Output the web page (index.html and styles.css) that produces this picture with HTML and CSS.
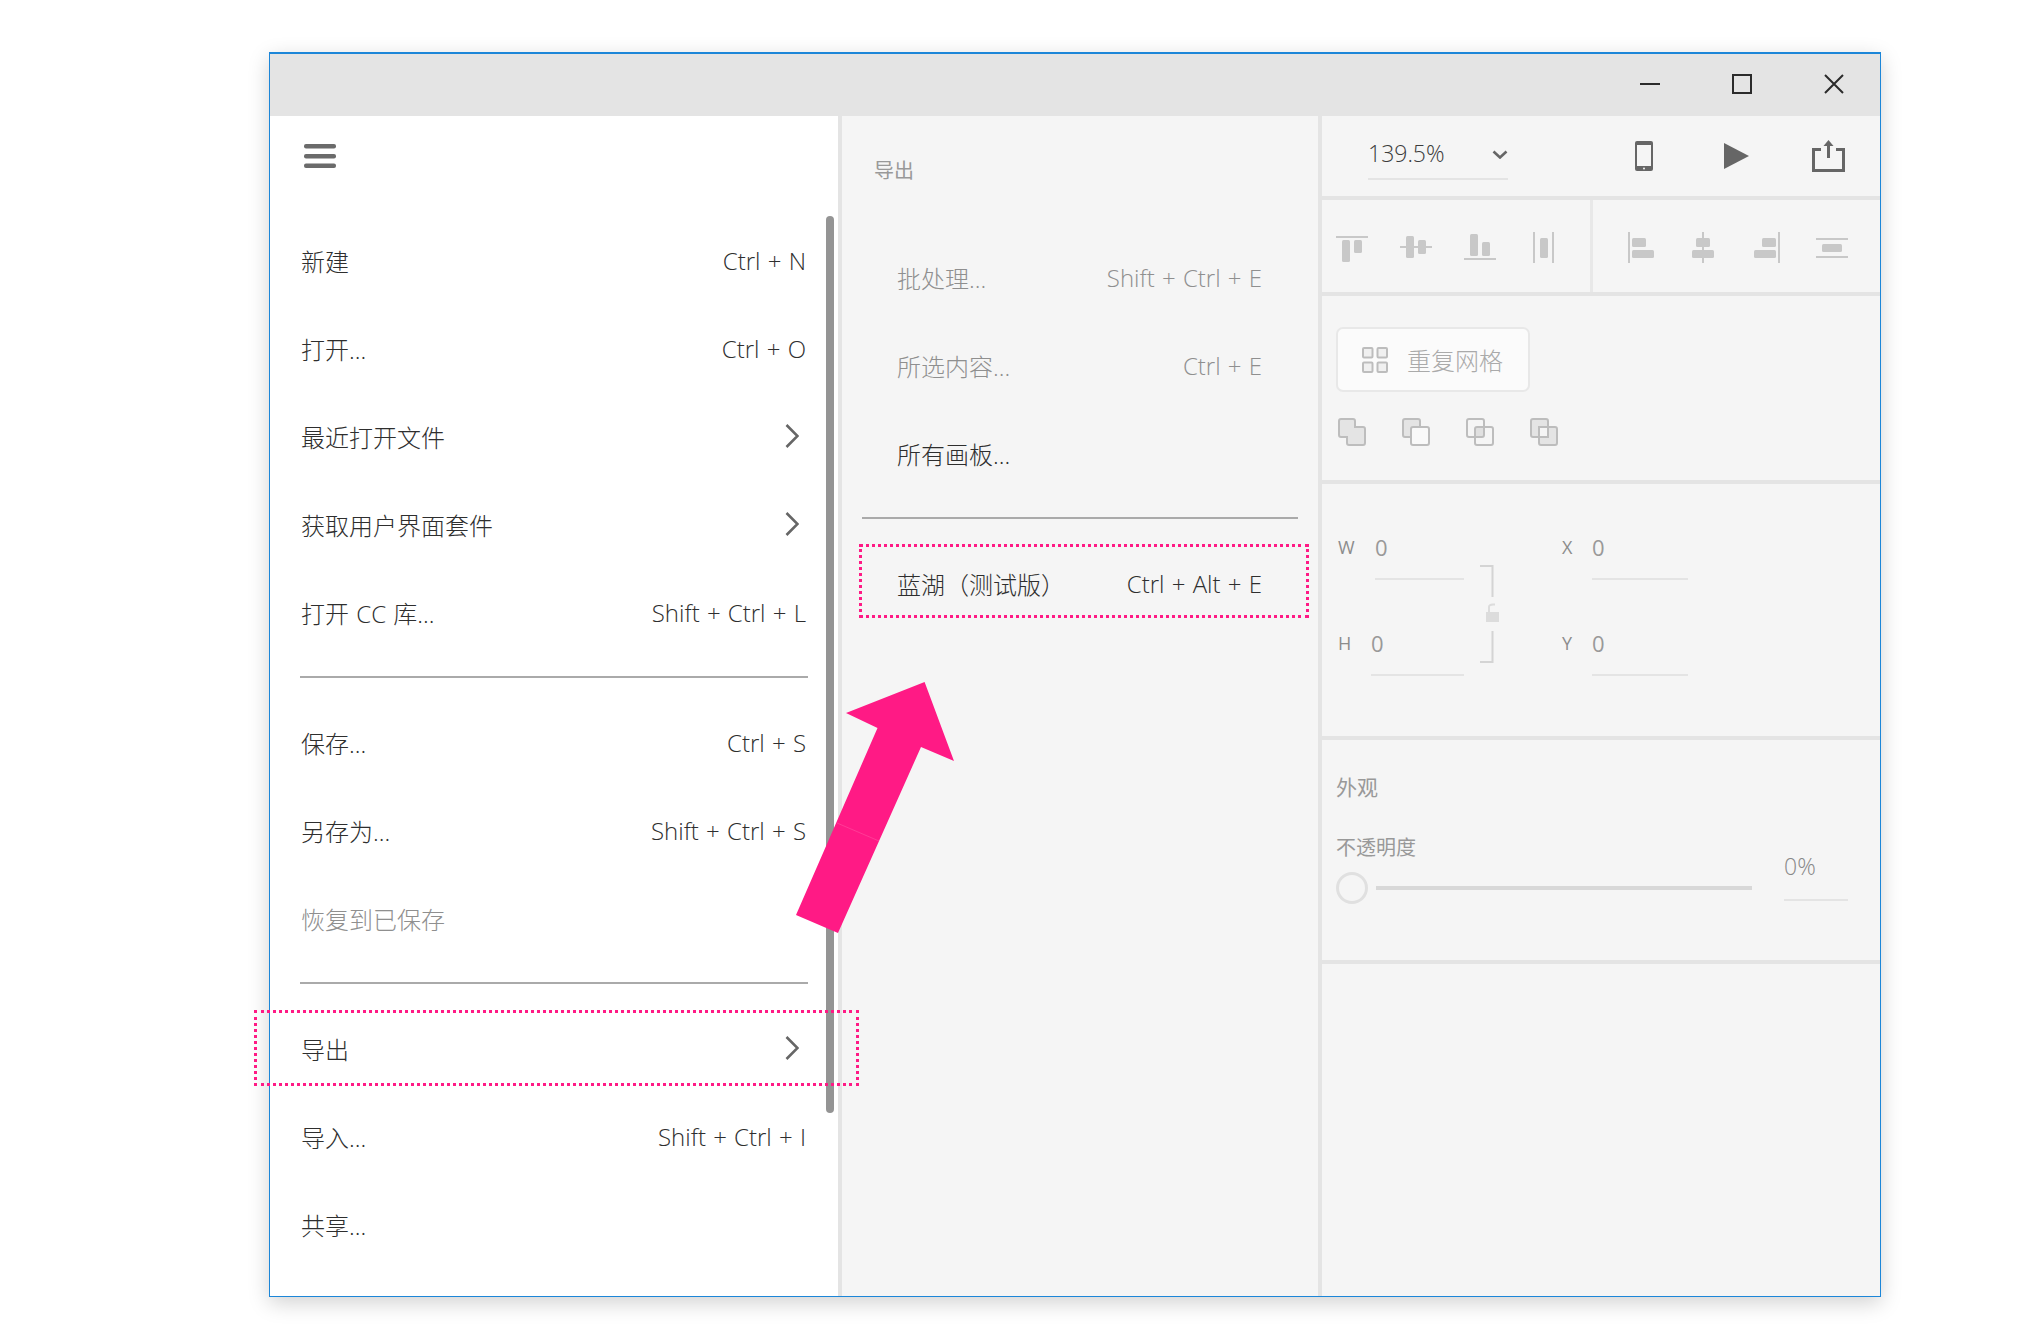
FILE: index.html
```html
<!DOCTYPE html>
<html lang="zh-CN">

<head>
    <meta charset="UTF-8">
    <title>导出</title>
    <link rel="stylesheet" href="styles.css">
</head>

<body>
    <div class="window">
        <header class="titlebar">
            <div class="win-btn">
                <svg width="20" height="20" viewBox="0 0 20 20"><path d="M0 10H20" stroke="#2b2b2b" stroke-width="2" /></svg>
            </div>
            <div class="win-btn">
                <svg width="20" height="20" viewBox="0 0 20 20"><rect x="1" y="1" width="18" height="18" fill="none" stroke="#2b2b2b" stroke-width="2" /></svg>
            </div>
            <div class="win-btn">
                <svg width="20" height="20" viewBox="0 0 20 20"><path d="M1 1L19 19M19 1L1 19" stroke="#2b2b2b" stroke-width="2" /></svg>
            </div>
        </header>

        <main class="panes">
            <section class="pane-menu">
                <div class="menu-top">
                    <svg width="32" height="24" viewBox="0 0 32 24" fill="#6b6b6b">
                        <rect y="0" width="32" height="4.6" rx="2" />
                        <rect y="10" width="32" height="4.6" rx="2" />
                        <rect y="19.6" width="32" height="4.4" rx="2" />
                    </svg>
                </div>
                <div class="menu-row"><span>新建</span><span>Ctrl + N</span></div>
                <div class="menu-row"><span>打开...</span><span>Ctrl + O</span></div>
                <div class="menu-row"><span>最近打开文件</span><svg class="chev" width="14" height="24" viewBox="0 0 14 24"><path d="M1.5 1L12.5 12L1.5 23" /></svg></div>
                <div class="menu-row"><span>获取用户界面套件</span><svg class="chev" width="14" height="24" viewBox="0 0 14 24"><path d="M1.5 1L12.5 12L1.5 23" /></svg></div>
                <div class="menu-row"><span>打开 CC 库...</span><span>Shift + Ctrl + L</span></div>
                <hr class="sep">
                <div class="menu-row"><span>保存...</span><span>Ctrl + S</span></div>
                <div class="menu-row"><span>另存为...</span><span>Shift + Ctrl + S</span></div>
                <div class="menu-row off"><span>恢复到已保存</span></div>
                <hr class="sep">
                <div class="menu-row"><span>导出</span><svg class="chev" width="14" height="24" viewBox="0 0 14 24"><path d="M1.5 1L12.5 12L1.5 23" /></svg></div>
                <div class="menu-row"><span>导入...</span><span>Shift + Ctrl + I</span></div>
                <div class="menu-row"><span>共享...</span></div>
                <div class="scrollbar"></div>
            </section>

            <section class="pane-sub">
                <div class="sub-title">导出</div>
                <div class="menu-row off"><span>批处理...</span><span>Shift + Ctrl + E</span></div>
                <div class="menu-row off"><span>所选内容...</span><span>Ctrl + E</span></div>
                <div class="menu-row"><span>所有画板...</span></div>
                <hr class="sep">
                <div class="menu-row"><span>蓝湖（测试版）</span><span>Ctrl + Alt + E</span></div>
            </section>

            <section class="pane-props">
                <div class="block toolbar">
                    <div class="zoom-select">
                        <span>139.5%</span>
                        <svg width="16" height="9" viewBox="0 0 16 9"><path d="M1.5 1.5L8 7.5L14.5 1.5" fill="none" stroke="#666" stroke-width="2.6" /></svg>
                    </div>
                    <div class="tool-icons">
                        <div class="tool">
                            <svg width="18" height="30" viewBox="0 0 18 30">
                                <rect width="18" height="30" rx="2" fill="#666" />
                                <rect x="2" y="4" width="14" height="21" fill="#f5f5f5" />
                                <circle cx="9" cy="27.5" r="1" fill="#f5f5f5" />
                            </svg>
                        </div>
                        <div class="tool">
                            <svg width="25" height="26" viewBox="0 0 25 26"><path d="M0 0L25 13L0 26Z" fill="#666" /></svg>
                        </div>
                        <div class="tool">
                            <svg width="33" height="32" viewBox="0 0 33 32" fill="none" stroke="#666" stroke-width="3">
                                <path d="M9 9.500H1.500V30.500H31.500V9.500H24" />
                                <path d="M16.500 18V2" />
                                <path d="M16.500 0L21.500 6H11.500Z" fill="#666" stroke="none" />
                            </svg>
                        </div>
                    </div>
                </div>

                <div class="block align-bar">
                    <div class="align-group">
                        <svg class="ai" viewBox="0 0 32 36"><path d="M0 9H32" /><rect x="6" y="12" width="8" height="22" rx="1.500" /><rect x="18" y="12" width="8" height="13" rx="1.500" /></svg>
                        <svg class="ai" viewBox="0 0 32 36"><path d="M0 19H32" /><rect x="6" y="8" width="8" height="22" rx="1.500" /><rect x="18" y="12" width="8" height="14" rx="1.500" /></svg>
                        <svg class="ai" viewBox="0 0 32 36"><path d="M0 31H32" /><rect x="6" y="6" width="8" height="22" rx="1.500" /><rect x="18" y="14" width="8" height="14" rx="1.500" /></svg>
                        <svg class="ai" viewBox="0 0 32 36"><path d="M6 4V35M25 4V35" /><rect x="12" y="10" width="8" height="20" rx="1.500" /></svg>
                    </div>
                    <div class="align-group second">
                        <svg class="ai" viewBox="0 0 32 36"><path d="M5 4V35" /><rect x="8" y="10" width="14" height="9" rx="1.500" /><rect x="8" y="22" width="22" height="8" rx="1.500" /></svg>
                        <svg class="ai" viewBox="0 0 32 36"><path d="M15 4V35" /><rect x="8" y="10" width="14" height="9" rx="1.500" /><rect x="4" y="22" width="22" height="8" rx="1.500" /></svg>
                        <svg class="ai" viewBox="0 0 32 36"><path d="M27 4V35" /><rect x="10" y="10" width="14" height="9" rx="1.500" /><rect x="2" y="22" width="22" height="8" rx="1.500" /></svg>
                        <svg class="ai" viewBox="0 0 32 36"><path d="M0 11H32M0 29H32" /><rect x="6" y="16" width="20" height="8" rx="1.500" /></svg>
                    </div>
                </div>

                <div class="block bool-block">
                    <div class="grid-btn">
                        <svg width="26" height="26" viewBox="0 0 26 26" fill="#f0f0f0" stroke="#bdbdbd" stroke-width="2">
                            <rect x="1" y="1" width="9.500" height="9.500" rx="1" />
                            <rect x="15.500" y="1" width="9.500" height="9.500" rx="1" />
                            <rect x="1" y="15.500" width="9.500" height="9.500" rx="1" />
                            <rect x="15.500" y="15.500" width="9.500" height="9.500" rx="1" />
                        </svg>
                        <span>重复网格</span>
                    </div>
                    <div class="bool-icons">
                        <svg class="bi" viewBox="0 0 28 28"><path d="M3 1H15Q17 1 17 3V9H25Q27 9 27 11V25Q27 27 25 27H11Q9 27 9 25V19H3Q1 19 1 17V3Q1 1 3 1Z" fill="#e4e4e4" /></svg>
                        <svg class="bi" viewBox="0 0 28 28"><rect x="1" y="1" width="17" height="18" rx="2" fill="#e4e4e4" /><rect x="9" y="9" width="18" height="18" rx="2" fill="#f9f9f9" /></svg>
                        <svg class="bi" viewBox="0 0 28 28"><rect x="9" y="9" width="9" height="10" fill="#e0e0e0" stroke="none" /><rect x="1" y="1" width="17" height="18" rx="2" fill="none" /><rect x="9" y="9" width="18" height="18" rx="2" fill="none" /></svg>
                        <svg class="bi" viewBox="0 0 28 28"><rect x="1" y="1" width="17" height="18" rx="2" fill="#e4e4e4" /><rect x="9" y="9" width="18" height="18" rx="2" fill="#e4e4e4" /><rect x="9" y="9" width="9" height="10" fill="#f5f5f5" /></svg>
                    </div>
                </div>

                <div class="block size-block">
                    <div class="size-grid">
                        <div class="field"><span class="field-label w">W</span><span class="field-value">0</span></div>
                        <svg class="link" width="40" height="146" viewBox="0 0 40 146">
                            <path d="M1 35H13.500V66M13.500 100V131H1" fill="none" stroke="#d4d4d4" stroke-width="2" />
                            <rect x="7" y="81" width="13" height="10" fill="#dcdcdc" />
                            <path d="M10 81V76Q10 73.500 14 73.500H16" fill="none" stroke="#dcdcdc" stroke-width="2" />
                        </svg>
                        <div class="field"><span class="field-label">X</span><span class="field-value">0</span></div>
                        <div class="field"><span class="field-label h">H</span><span class="field-value">0</span></div>
                        <div class="field"><span class="field-label">Y</span><span class="field-value">0</span></div>
                    </div>
                </div>

                <div class="block look-block">
                    <div class="look-title">外观</div>
                    <div class="look-row">
                        <div class="look-left">
                            <div class="look-label">不透明度</div>
                            <div class="slider">
                                <div class="knob"></div>
                                <div class="track"></div>
                            </div>
                        </div>
                        <div class="percent">0%</div>
                    </div>
                </div>
            </section>
        </main>

        <!-- 标注层 -->
        <div class="mark mark-export"></div>
        <div class="mark mark-lanhu"></div>
        <svg class="arrow" width="160" height="255" viewBox="0 0 160 255">
            <path d="M128.600 0L50 31L81.500 46L0 233L42 251L125 65L158 79Z" fill="#ff1a85" />
            <path d="M41 141L83 159" stroke="#ff5aa6" stroke-width="0.500" />
        </svg>
    </div>
</body>

</html>
```

FILE: styles.css
```css
html,
body {
    margin: 0;
    height: 100%;
    background: #fff;
}

body {
    padding: 52px 0 0 269px;
    box-sizing: border-box;
    font-family: "Open Sans", "Noto Sans CJK SC", sans-serif;
    font-size: 22px;
    color: #2e2e2e;
}

.window {
    position: relative;
    width: 1612px;
    height: 1245px;
    box-sizing: border-box;
    border: 1px solid #1c86d8;
    border-top-width: 2px;
    display: flex;
    flex-direction: column;
    background: #fff;
    box-shadow: 0 6px 20px rgba(0, 0, 0, 0.18);
}

.titlebar {
    height: 62px;
    box-sizing: border-box;
    padding-bottom: 2px;
    flex: none;
    background: #e4e4e4;
    display: flex;
    justify-content: flex-end;
}

.win-btn {
    width: 92px;
    display: flex;
    justify-content: center;
    align-items: center;
}

.panes {
    flex: 1;
    display: flex;
    min-height: 0;
}

/* left menu */
.pane-menu {
    position: relative;
    width: 568px;
    flex: none;
    border-right: 4px solid #e4e4e4;
}

.menu-top {
    height: 102px;
    box-sizing: border-box;
    padding: 28px 0 0 34px;
}

.menu-top svg {
    display: block;
}

.menu-row {
    height: 88px;
    box-sizing: border-box;
    padding: 0 32px 4px 31px;
    display: flex;
    justify-content: space-between;
    align-items: center;
    white-space: nowrap;
    font-size: 24px;
    font-weight: 300;
    word-spacing: 1px;
}

.off {
    color: #8f8f8f;
}

.chev {
    margin-right: 7px;
    fill: none;
    stroke: #666;
    stroke-width: 2.6;
}

.sep {
    height: 2px;
    margin: 18px 30px 22px;
    border: 0;
    background: #aaa;
}

.scrollbar {
    position: absolute;
    top: 100px;
    right: 4px;
    width: 8px;
    height: 897px;
    border-radius: 4px;
    background: #949494;
}

/* export submenu */
.pane-sub {
    width: 476px;
    flex: none;
    background: #f5f5f5;
    border-right: 4px solid #e4e4e4;
}

.sub-title {
    height: 119px;
    box-sizing: border-box;
    padding: 39px 0 0 32px;
    line-height: 32px;
    font-size: 20px;
    color: #999;
}

.pane-sub .menu-row {
    padding: 0 56px 4px 55px;
}

.pane-sub .sep {
    margin-left: 20px;
    margin-right: 20px;
}

/* right properties */
.pane-props {
    flex: 1;
    background: #f5f5f5;
}

.block {
    box-sizing: border-box;
    border-bottom: 4px solid #e4e4e4;
}

.toolbar {
    height: 84px;
    display: flex;
    align-items: center;
    justify-content: space-between;
    padding: 0 6px 0 46px;
}

.zoom-select {
    width: 140px;
    height: 54px;
    box-sizing: border-box;
    padding-top: 11px;
    margin-bottom: 6px;
    border-bottom: 2px solid #e4e4e4;
    display: flex;
    justify-content: space-between;
    color: #3c3c3c;
    line-height: 32px;
    font-size: 23px;
    font-weight: 300;
}

.zoom-select svg {
    margin-top: 13px;
}

.tool-icons {
    display: flex;
}

.tool {
    width: 92px;
    display: flex;
    justify-content: center;
    align-items: center;
}

.align-bar {
    height: 96px;
    display: flex;
}

.align-group {
    width: 271px;
    box-sizing: border-box;
    padding-left: 14px;
    display: flex;
    gap: 32px;
    align-items: center;
    border-right: 3px solid #e8e8e8;
}

.align-group.second {
    border-right: 0;
    padding-left: 31px;
}

.ai {
    width: 32px;
    height: 36px;
    flex: none;
    fill: #c8c8c8;
    stroke: none;
}

.ai path {
    fill: none;
    stroke: #c8c8c8;
    stroke-width: 2;
}

.bool-block {
    height: 188px;
    padding: 31px 0 0 14px;
}

.grid-btn {
    width: 194px;
    height: 65px;
    box-sizing: border-box;
    padding-left: 24px;
    display: flex;
    align-items: center;
    gap: 19px;
    border: 2px solid #e8e8e8;
    border-radius: 7px;
    background: #fbfbfb;
    font-size: 24px;
    font-weight: 300;
    color: #aaa;
}

.bool-icons {
    display: flex;
    gap: 36px;
    margin: 26px 0 0 2px;
}

.bi {
    width: 28px;
    height: 28px;
    fill: none;
    stroke: #bdbdbd;
    stroke-width: 2;
}

.size-block {
    height: 256px;
    padding: 47px 0 0 16px;
}

.size-grid {
    display: grid;
    grid-template-columns: 126px 98px 126px;
    grid-template-rows: 49px 49px;
    row-gap: 47px;
}

.field {
    height: 49px;
    display: flex;
    line-height: 32px;
    color: #999;
}

.field-label {
    width: 30px;
    font-size: 18px;
    color: #8c8c8c;
}

.field-label.w {
    width: 37px;
}

.field-label.h {
    width: 33px;
}

.field-value {
    flex: 1;
    border-bottom: 2px solid #e4e4e4;
}

.link {
    grid-column: 2;
    grid-row: 1 / 3;
    margin-left: 15px;
}

.look-block {
    height: 224px;
    padding: 31px 0 0 14px;
    color: #999;
}

.look-title {
    line-height: 32px;
    font-size: 21px;
}

.look-row {
    display: flex;
    gap: 32px;
    margin-top: 29px;
}

.look-left {
    width: 416px;
}

.look-label {
    line-height: 32px;
    font-size: 20px;
}

.slider {
    margin-top: 8px;
    display: flex;
    align-items: center;
    gap: 8px;
}

.knob {
    width: 32px;
    height: 32px;
    box-sizing: border-box;
    border: 3px solid #e0e0e0;
    border-radius: 50%;
}

.track {
    flex: 1;
    height: 4px;
    background: #d8d8d8;
}

.percent {
    width: 64px;
    height: 49px;
    margin-top: 18px;
    line-height: 32px;
    font-size: 23px;
    font-weight: 300;
    color: #888;
    border-bottom: 2px solid #e4e4e4;
}

/* annotations over the screenshot */
.mark {
    position: absolute;
    box-sizing: border-box;
    border: 3px dotted #ff1a85;
}

.mark-export {
    left: -16px;
    top: 956px;
    width: 605px;
    height: 76px;
}

.mark-lanhu {
    left: 589px;
    top: 490px;
    width: 450px;
    height: 74px;
}

.arrow {
    position: absolute;
    left: 526px;
    top: 628px;
}
```
